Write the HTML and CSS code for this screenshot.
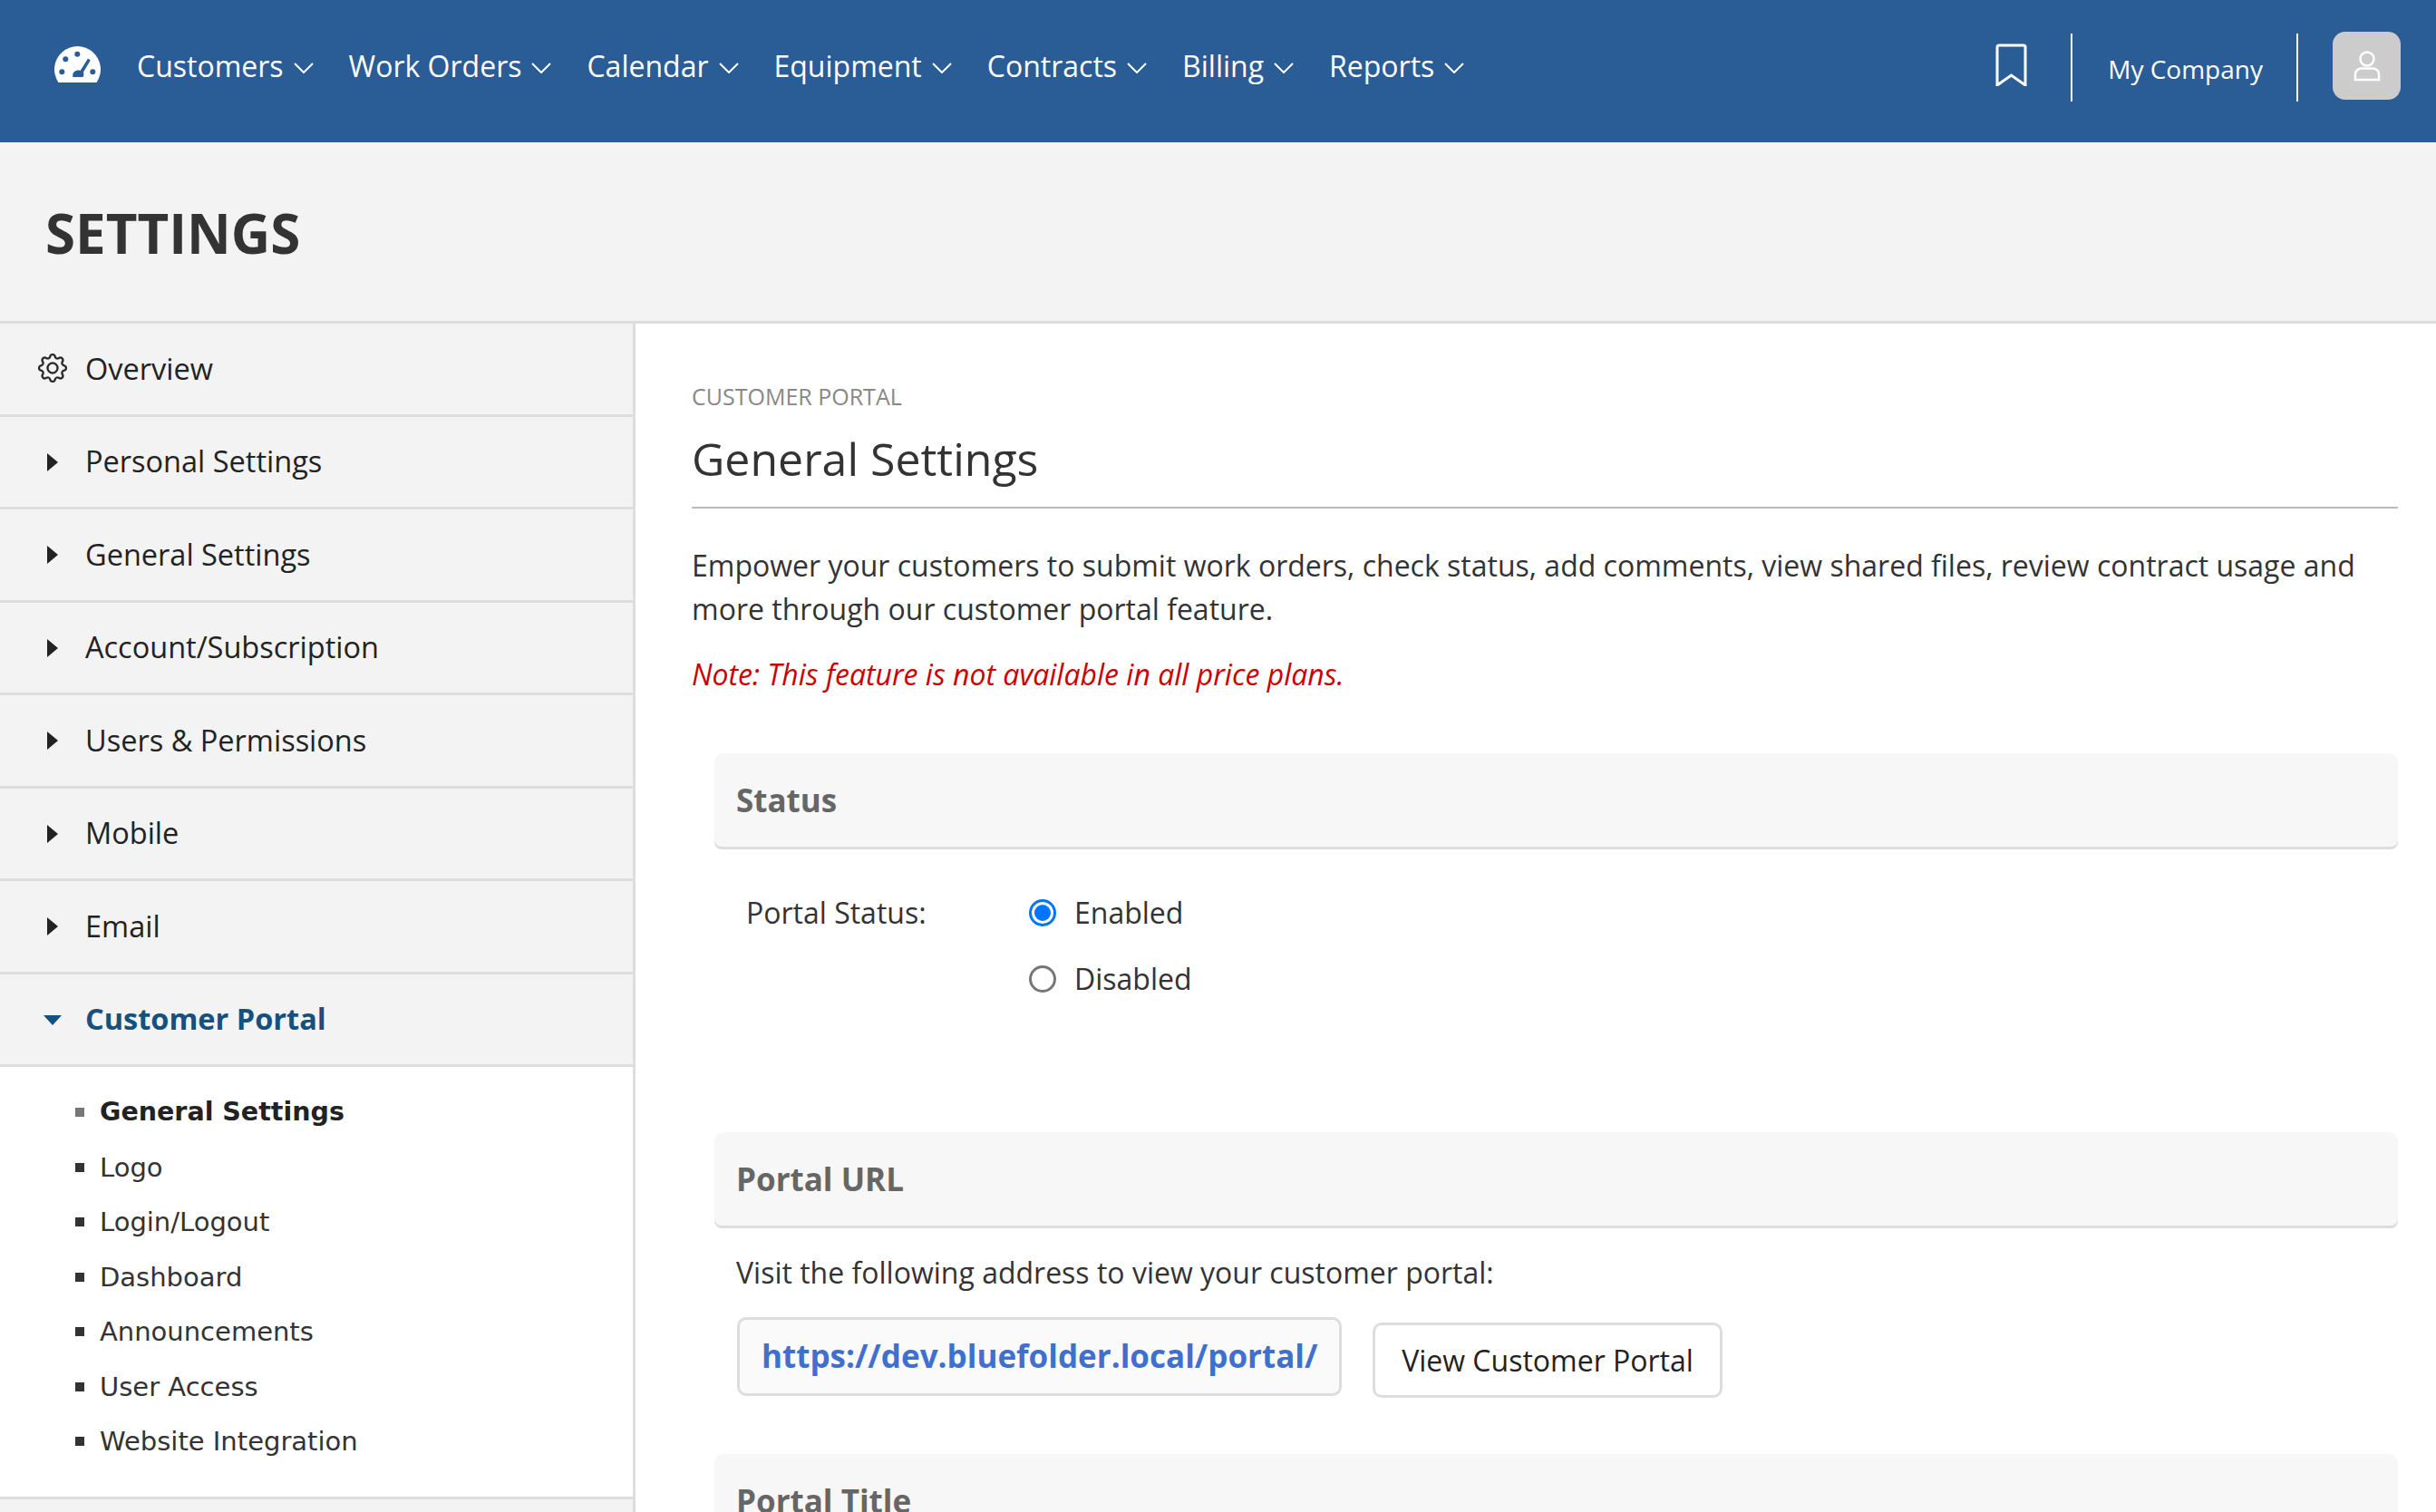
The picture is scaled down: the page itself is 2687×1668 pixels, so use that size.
FILE: index.html
```html
<!DOCTYPE html>
<html lang="en">
<head>
<meta charset="utf-8">
<title>Settings</title>
<link rel="stylesheet" href="styles.css">
</head>
<body>
<svg class="defs" width="0" height="0" aria-hidden="true">
  <symbol id="chev" viewBox="0 0 22 12"><polyline points="1,1 11,11 21,1" fill="none" stroke="currentColor" stroke-width="2"/></symbol>
</svg>
<header class="topbar">
  <svg class="logo" viewBox="0 0 51 40" width="51" height="40">
    <path fill="#fff" d="M4.5 40A25.5 25.5 0 1 1 46.5 40Z"/>
    <g fill="#2a5c96">
      <circle cx="12.3" cy="14.3" r="3"/><circle cx="25.3" cy="8.7" r="3"/><circle cx="8.3" cy="28.3" r="3"/><circle cx="42.3" cy="28.3" r="3"/>
      <path d="M37 13.5l2.8 2-7.8 13c.8 2 .4 4-.4 5.500H20.500c-.8-3 .4-6 3.500-7 2-.6 3.500-.4 4.600-.1Z"/>
    </g>
  </svg>
  <nav class="mainnav">
    <a class="navlink">Customers <svg class="chev"><use href="#chev"/></svg></a>
    <a class="navlink">Work Orders <svg class="chev"><use href="#chev"/></svg></a>
    <a class="navlink">Calendar <svg class="chev"><use href="#chev"/></svg></a>
    <a class="navlink">Equipment <svg class="chev"><use href="#chev"/></svg></a>
    <a class="navlink">Contracts <svg class="chev"><use href="#chev"/></svg></a>
    <a class="navlink">Billing <svg class="chev"><use href="#chev"/></svg></a>
    <a class="navlink">Reports <svg class="chev"><use href="#chev"/></svg></a>
  </nav>
  <div class="tools">
    <svg class="bookmark" viewBox="0 0 35 47" width="35" height="47"><path d="M2 46V4a2 2 0 0 1 2-2h27a2 2 0 0 1 2 2v42L17.500 35Z" fill="none" stroke="#fff" stroke-width="3"/></svg>
    <div class="company">My Company</div>
    <div class="avatar">
      <svg viewBox="0 0 30 34" width="30" height="34"><ellipse cx="15" cy="9" rx="7.500" ry="7.500" fill="none" stroke="#fff" stroke-width="2.500"/><path d="M2 32V26a6.500 6.500 0 0 1 6.500-6.500h13a6.500 6.500 0 0 1 6.500 6.500v6Z" fill="none" stroke="#fff" stroke-width="2.500"/></svg>
    </div>
  </div>
</header>
<div class="titleband"><h1>SETTINGS</h1></div>
<div class="layout">
  <aside class="sidebar">
    <div class="item"><svg class="gear" viewBox="0 0 16 16" width="32" height="32"><path fill="#222" stroke="#222" stroke-width=".15" d="M8 4.754a3.246 3.246 0 1 0 0 6.492 3.246 3.246 0 0 0 0-6.492zM5.754 8a2.246 2.246 0 1 1 4.492 0 2.246 2.246 0 0 1-4.492 0z"/><path fill="#222" stroke="#222" stroke-width=".15" d="M9.796 1.343c-.527-1.790-3.065-1.790-3.592 0l-.094.319a.873.873 0 0 1-1.255.520l-.292-.160c-1.640-.892-3.433.902-2.540 2.541l.159.292a.873.873 0 0 1-.520 1.255l-.319.094c-1.790.527-1.790 3.065 0 3.592l.319.094a.873.873 0 0 1 .520 1.255l-.160.292c-.892 1.640.901 3.434 2.541 2.540l.292-.159a.873.873 0 0 1 1.255.520l.094.319c.527 1.790 3.065 1.790 3.592 0l.094-.319a.873.873 0 0 1 1.255-.520l.292.160c1.640.893 3.434-.902 2.540-2.541l-.159-.292a.873.873 0 0 1 .520-1.255l.319-.094c1.790-.527 1.790-3.065 0-3.592l-.319-.094a.873.873 0 0 1-.520-1.255l.160-.292c.893-1.640-.902-3.433-2.541-2.540l-.292.159a.873.873 0 0 1-1.255-.520l-.094-.319zm-2.633.283c.246-.835 1.428-.835 1.674 0l.094.319a1.873 1.873 0 0 0 2.693 1.115l.291-.160c.764-.415 1.600.420 1.184 1.185l-.159.292a1.873 1.873 0 0 0 1.116 2.692l.318.094c.835.246.835 1.428 0 1.674l-.319.094a1.873 1.873 0 0 0-1.115 2.693l.160.291c.415.764-.420 1.600-1.185 1.184l-.291-.159a1.873 1.873 0 0 0-2.693 1.116l-.094.318c-.246.835-1.428.835-1.674 0l-.094-.319a1.873 1.873 0 0 0-2.692-1.115l-.292.160c-.764.415-1.600-.420-1.184-1.185l.159-.291A1.873 1.873 0 0 0 1.945 8.930l-.319-.094c-.835-.246-.835-1.428 0-1.674l.319-.094A1.873 1.873 0 0 0 3.060 4.377l-.160-.292c-.415-.764.420-1.600 1.185-1.184l.292.159a1.873 1.873 0 0 0 2.692-1.115l.094-.319z"/></svg>Overview</div>
    <div class="item"><span class="caret"></span>Personal Settings</div>
    <div class="item"><span class="caret"></span>General Settings</div>
    <div class="item"><span class="caret"></span>Account/Subscription</div>
    <div class="item"><span class="caret"></span>Users &amp; Permissions</div>
    <div class="item"><span class="caret"></span>Mobile</div>
    <div class="item"><span class="caret"></span>Email</div>
    <div class="item item-open"><span class="caret-down"></span>Customer Portal</div>
    <ul class="submenu">
      <li class="current">General Settings</li>
      <li>Logo</li>
      <li>Login/Logout</li>
      <li>Dashboard</li>
      <li>Announcements</li>
      <li>User Access</li>
      <li>Website Integration</li>
    </ul>
    <div class="item item-tail"></div>
  </aside>
  <main class="content">
    <div class="eyebrow">CUSTOMER PORTAL</div>
    <h2>General Settings</h2>
    <p class="lead">Empower your customers to submit work orders, check status, add comments, view shared files, review contract usage and more through our customer portal feature.</p>
    <p class="note">Note: This feature is not available in all price plans.</p>
    <section class="panel">
      <h3>Status</h3>
      <div class="status-row">
        <div class="label">Portal Status:</div>
        <div class="options">
          <label class="option"><input type="radio" name="st" checked>Enabled</label>
          <label class="option"><input type="radio" name="st">Disabled</label>
        </div>
      </div>
    </section>
    <section class="panel panel-url">
      <h3>Portal URL</h3>
      <p class="visit">Visit the following address to view your customer portal:</p>
      <div class="url-row">
        <a class="urlbox">https://dev.bluefolder.local/portal/</a>
        <button class="btn" type="button">View Customer Portal</button>
      </div>
    </section>
    <section class="panel panel-title">
      <h3>Portal Title</h3>
    </section>
  </main>
</div>
</body>
</html>
```
FILE: styles.css
```css
* { box-sizing: border-box; }
html, body { margin: 0; padding: 0; height: 1668px; overflow: hidden; background: #fff; }
body { font-family: "Open Sans", "Liberation Sans", sans-serif; color: #333; font-size: 32px; line-height: 48px; }
.defs { position: absolute; }

.topbar { height: 157px; background: #2a5c96; display: flex; align-items: flex-start; padding: 51px 0 0 60px; color: #fff; }
.logo { flex: none; margin-right: 40px; }
.mainnav { display: flex; gap: 39px; }
.navlink { display: flex; align-items: center; gap: 11px; font-size: 32px; line-height: 44px; white-space: nowrap; }
.chev { width: 22px; height: 12px; margin-top: 4px; color: #fff; }
.tools { margin-left: auto; display: flex; align-items: flex-start; margin-top: -16px; padding-right: 39px; }
.bookmark { margin: 13px 48px 0 0; }
.company { border-left: 2px solid #fff; border-right: 2px solid #fff; height: 75px; padding: 2px 37px 0 39px; margin-top: 2px; font-size: 28px; line-height: 75px; white-space: nowrap; }
.avatar { width: 75px; height: 75px; margin-left: 38px; border-radius: 14px; background: #ccc; display: flex; align-items: center; justify-content: center; }

.titleband { height: 200px; background: #f3f3f3; border-bottom: 3px solid #ddd; padding: 59px 0 0 50px; }
h1 { margin: 0; font-size: 60px; line-height: 82px; font-weight: 700; color: #333; }

.layout { display: flex; align-items: stretch; height: 1311px; overflow: hidden; }
.sidebar { width: 701px; flex: none; border-right: 3px solid #ddd; background: #fff; }
.item { height: 102.500px; background: #f3f3f3; border-bottom: 3px solid #ddd; display: flex; align-items: center; font-size: 32.500px; color: #222; position: relative; padding-left: 94px; }
.gear { position: absolute; left: 42px; top: 33px; }
.caret { position: absolute; left: 52px; top: 40px; border-left: 12px solid #222; border-top: 10.500px solid transparent; border-bottom: 10.500px solid transparent; }
.caret-down { position: absolute; left: 48px; top: 45px; border-top: 11px solid #15507f; border-left: 10px solid transparent; border-right: 10px solid transparent; }
.item-open { color: #15507f; font-weight: 700; }
.submenu { list-style: none; margin: 0; padding: 20px 0 12px 110px; background: #fff; height: 477px; border-bottom: 3px solid #ddd; font-family: "DejaVu Sans", sans-serif; font-size: 29px; color: #333; }
.submenu li { height: 60.500px; line-height: 60.500px; position: relative; }
.submenu li::before { content: ""; position: absolute; left: -27px; top: 25px; width: 10px; height: 10px; background: #333; }
.submenu .current { font-weight: 700; color: #222; font-size: 28.500px; }
.submenu .current::before { background: #777; }
.item-tail { height: 60px; border-bottom: 0; }

.content { flex: 1; min-width: 0; padding: 63px 42px 0 62px; }
.eyebrow { font-size: 25px; line-height: 34px; color: #888; }
h2 { margin: 17px 0 0; padding-bottom: 18px; border-bottom: 2px solid #bbb; font-size: 50px; line-height: 70px; font-weight: 400; color: #333; }
.lead { margin: 39px 0 0; }
.note { margin: 24px 0 0; color: #c00; font-style: italic; }
.panel { margin: 63px 0 0 25px; }
h3 { margin: 0; height: 103px; padding-left: 24px; background: #f7f7f7; border-radius: 10px 10px 8px 8px; box-shadow: 0 3px 0 0 #ddd; font-size: 35px; line-height: 103px; font-weight: 700; color: #666; }
.status-row { display: flex; padding: 49px 0 0 35px; }
.label { width: 312px; flex: none; }
.options { display: flex; flex-direction: column; gap: 25px; }
.option { display: flex; align-items: center; gap: 20px; height: 48px; line-height: 48px; }
.option input { appearance: none; -webkit-appearance: none; margin: 0; width: 30px; height: 30px; border-radius: 50%; border: 3px solid #767676; padding: 3px; background-clip: content-box; }
.option input:checked { border-color: #0075ff; background-color: #0075ff; }
.panel-url { margin-top: 145px; }
.visit { margin: 28px 0 0 24px; }
.url-row { display: flex; align-items: flex-start; margin: 25px 0 0 25px; gap: 34px; }
.urlbox { display: block; width: 667px; height: 87px; border: 3px solid #ddd; border-radius: 10px; background: #fafafa; padding-left: 24px; font-size: 35px; line-height: 80px; font-weight: 700; color: #3f6fcf; white-space: nowrap; }
.btn { margin-top: 6px; width: 386px; height: 83px; background: #fff; border: 3px solid #ddd; border-radius: 10px; font: inherit; color: #222; padding: 0; }
.panel-title { margin-top: 62px; }
```
